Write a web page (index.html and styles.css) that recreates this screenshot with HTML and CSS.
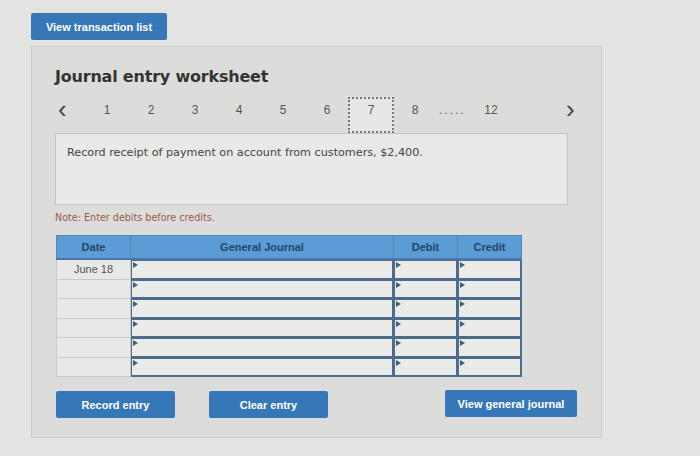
FILE: index.html
```html
<!DOCTYPE html>
<html lang="en">
<head>
  <meta charset="UTF-8">
  <meta name="viewport" content="width=device-width, initial-scale=1.0">
  <title>Journal entry worksheet</title>
  <link rel="stylesheet" href="styles.css">
</head>
<body>
  <button class="btn top-btn">View transaction list</button>

  <div class="panel">
    <h1>Journal entry worksheet</h1>

    <div class="pager">
      <span class="arrow prev">&lsaquo;</span>
      <span class="page">1</span>
      <span class="page">2</span>
      <span class="page">3</span>
      <span class="page">4</span>
      <span class="page">5</span>
      <span class="page">6</span>
      <span class="page current">7</span>
      <span class="page">8</span>
      <span class="page dots">.....</span>
      <span class="page">12</span>
      <span class="arrow next">&rsaquo;</span>
    </div>

    <div class="desc">Record receipt of payment on account from customers, $2,400.</div>

    <p class="note">Note: Enter debits before credits.</p>

    <table class="journal">
      <thead>
        <tr>
          <th class="c-date">Date</th>
          <th class="c-gj">General Journal</th>
          <th class="c-num">Debit</th>
          <th class="c-num">Credit</th>
        </tr>
      </thead>
      <tbody>
        <tr><td class="date">June 18</td><td class="inp"><input></td><td class="inp"><input></td><td class="inp"><input></td></tr>
        <tr><td class="date"></td><td class="inp"><input></td><td class="inp"><input></td><td class="inp"><input></td></tr>
        <tr><td class="date"></td><td class="inp"><input></td><td class="inp"><input></td><td class="inp"><input></td></tr>
        <tr><td class="date"></td><td class="inp"><input></td><td class="inp"><input></td><td class="inp"><input></td></tr>
        <tr><td class="date"></td><td class="inp"><input></td><td class="inp"><input></td><td class="inp"><input></td></tr>
        <tr><td class="date"></td><td class="inp"><input></td><td class="inp"><input></td><td class="inp"><input></td></tr>
      </tbody>
    </table>

    <div class="actions">
      <button class="btn act-btn">Record entry</button>
      <button class="btn act-btn clear">Clear entry</button>
      <button class="btn act-btn view">View general journal</button>
    </div>
  </div>
</body>
</html>
```

FILE: styles.css
```css
body {
  margin: 0;
  padding: 13px 0 0 31px;
  background: #e3e3e1;
  font-family: "Liberation Sans", Arial, sans-serif;
  color: #444;
}
.btn {
  display: block;
  border: none;
  border-radius: 2px;
  background: #3677b8;
  color: #fff;
  font-family: "Liberation Sans", Arial, sans-serif;
  font-weight: bold;
  font-size: 11px;
  cursor: pointer;
  padding: 0;
}
.top-btn {
  width: 136px;
  height: 27px;
}
.panel {
  margin-top: 6px;
  width: 571px;
  height: 392px;
  box-sizing: border-box;
  background: #dcdcda;
  border: 1px solid #cacac8;
  padding: 20px 0 0 23px;
}
h1 {
  margin: 0;
  font-family: "DejaVu Sans", Verdana, sans-serif;
  font-size: 16px;
  font-weight: bold;
  color: #333;
  letter-spacing: -0.2px;
}
.pager {
  display: flex;
  align-items: flex-start;
  height: 36px;
  margin-top: 11px;
  font-size: 12px;
  line-height: 26px;
  color: #555;
}
.arrow {
  font-size: 26px;
  color: #444;
  line-height: 24px;
}
.prev {
  width: 27px;
  padding-left: 3px;
}
.page {
  width: 44px;
  text-align: center;
}
.current {
  box-sizing: border-box;
  height: 36px;
  line-height: 22px;
  width: 46px;
  margin: 0 -1px;
  border: 2px dotted #777;
  background: #e6e6e4;
}
.dots {
  width: 26px;
  margin-right: 6px;
  letter-spacing: 2px;
  text-indent: 2px;
}
.next {
  margin-left: 53px;
}
.desc {
  width: 513px;
  height: 72px;
  box-sizing: border-box;
  background: #e9e9e7;
  border: 1px solid #c4c4c2;
  padding: 12px 11px;
  font-family: "DejaVu Sans", Verdana, sans-serif;
  font-size: 11.2px;
  color: #444;
}
.note {
  margin: 7px 0 0;
  font-family: "DejaVu Sans", Verdana, sans-serif;
  font-size: 9.6px;
  color: #9a5a4a;
}
.journal {
  margin: 12px 0 0 1px;
  border-collapse: collapse;
  table-layout: fixed;
  width: 462px;
}
.journal th {
  height: 22px;
  padding: 0;
  background: #5b9bd6;
  color: #24456b;
  font-size: 11px;
  font-weight: bold;
  border: 1px solid #4e88c0;
  border-bottom: 2px solid #4a78a8;
}
.c-date { width: 73px; }
.c-gj { width: 262px; }
.c-num { width: 63px; }
.journal td {
  height: 18.5px;
  padding: 0;
}
.date {
  background: #e8e8e6;
  border: 1px solid #c9c9c7;
  text-align: center;
  font-size: 11px;
  color: #555;
}
.inp {
  position: relative;
  border: 1px solid #4d6b8b;
}
.inp input {
  display: block;
  width: 100%;
  height: 18.5px;
  box-sizing: border-box;
  border: 1px solid #4d6b8b;
  background: #ebebea;
  margin: 0;
}
.inp::before {
  content: "";
  position: absolute;
  left: 2px;
  top: 2px;
  border-left: 5px solid #3f5f80;
  border-top: 3px solid transparent;
  border-bottom: 3px solid transparent;
}
.actions {
  display: flex;
  margin: 14px 0 0 1px;
  align-items: flex-start;
}
.act-btn {
  width: 119px;
  height: 27px;
}
.clear {
  margin-left: 34px;
}
.view {
  width: 132px;
  margin-left: 117px;
  margin-top: -1px;
}
```
